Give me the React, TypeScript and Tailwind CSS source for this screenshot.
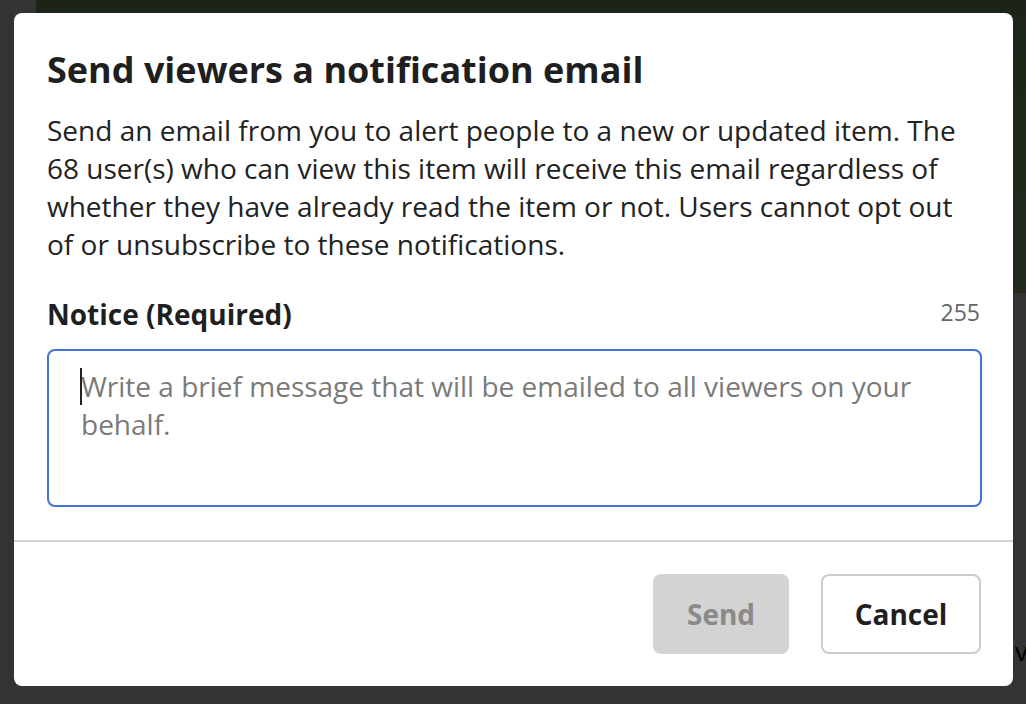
export default function App() {
  return (
    <div
      className="relative h-[704px] w-full overflow-hidden bg-[#333333]"
      style={{ fontFamily: '"Open Sans", "Noto Sans", sans-serif' }}
    >
      {/* page behind the dialog */}
      <div className="absolute left-[36px] right-0 top-0 h-[293px] bg-gradient-to-b from-[#1b2416] via-[#1f2a1a] to-[#222a1e]" />
      <span className="absolute left-[1015px] top-[632px] text-[26px] text-black">v</span>

      <div className="relative pl-[14px] pt-[13px]">
        <div className="flex h-[673px] w-[999px] flex-col rounded-[8px] bg-white">
          <div className="px-[33px] pt-[35px]">
            <h2 className="text-[36px] font-bold leading-[44px] text-[#1f1f1f]">
              Send viewers a notification email
            </h2>
            <p className="mt-[19px] text-[28px] leading-[38px] text-[#222222]">
              Send an email from you to alert people to a new or updated item. The 68 user(s) who can view this item
              will receive this email regardless of whether they have already read the item or not. Users cannot opt
              out of or unsubscribe to these notifications.
            </p>

            <div className="mt-[32px] flex items-center justify-between">
              <label className="text-[28px] font-bold leading-[38px] text-[#1f1f1f]">Notice (Required)</label>
              <span className="-mt-[4px] text-[23px] leading-[30px] text-[#666666]">255</span>
            </div>

            <div className="relative mt-[16px] h-[158px] w-[935px] rounded-[8px] border-2 border-[#4470d8] py-[16px] pl-[32px] pr-[24px]">
              <span className="absolute left-[31px] top-[17px] h-[37px] w-[2px] bg-[#222222]" />
              <p className="text-[28px] leading-[38px] text-[#7a7a7a]">
                Write a brief message that will be emailed to all viewers on your behalf.
              </p>
            </div>
          </div>

          <div className="mt-[33px] h-[2px] w-full bg-[#d4d4d4]" />

          <div className="flex justify-end gap-[32px] px-[32px] pt-[32px]">
            <button className="h-[80px] w-[136px] rounded-[8px] bg-[#d3d3d3] text-[28px] font-bold text-[#8a8a8a]">
              Send
            </button>
            <button className="h-[80px] w-[160px] rounded-[8px] border-2 border-[#cccccc] bg-white text-[28px] font-bold text-[#1f1f1f]">
              Cancel
            </button>
          </div>
        </div>
      </div>
    </div>
  );
}
